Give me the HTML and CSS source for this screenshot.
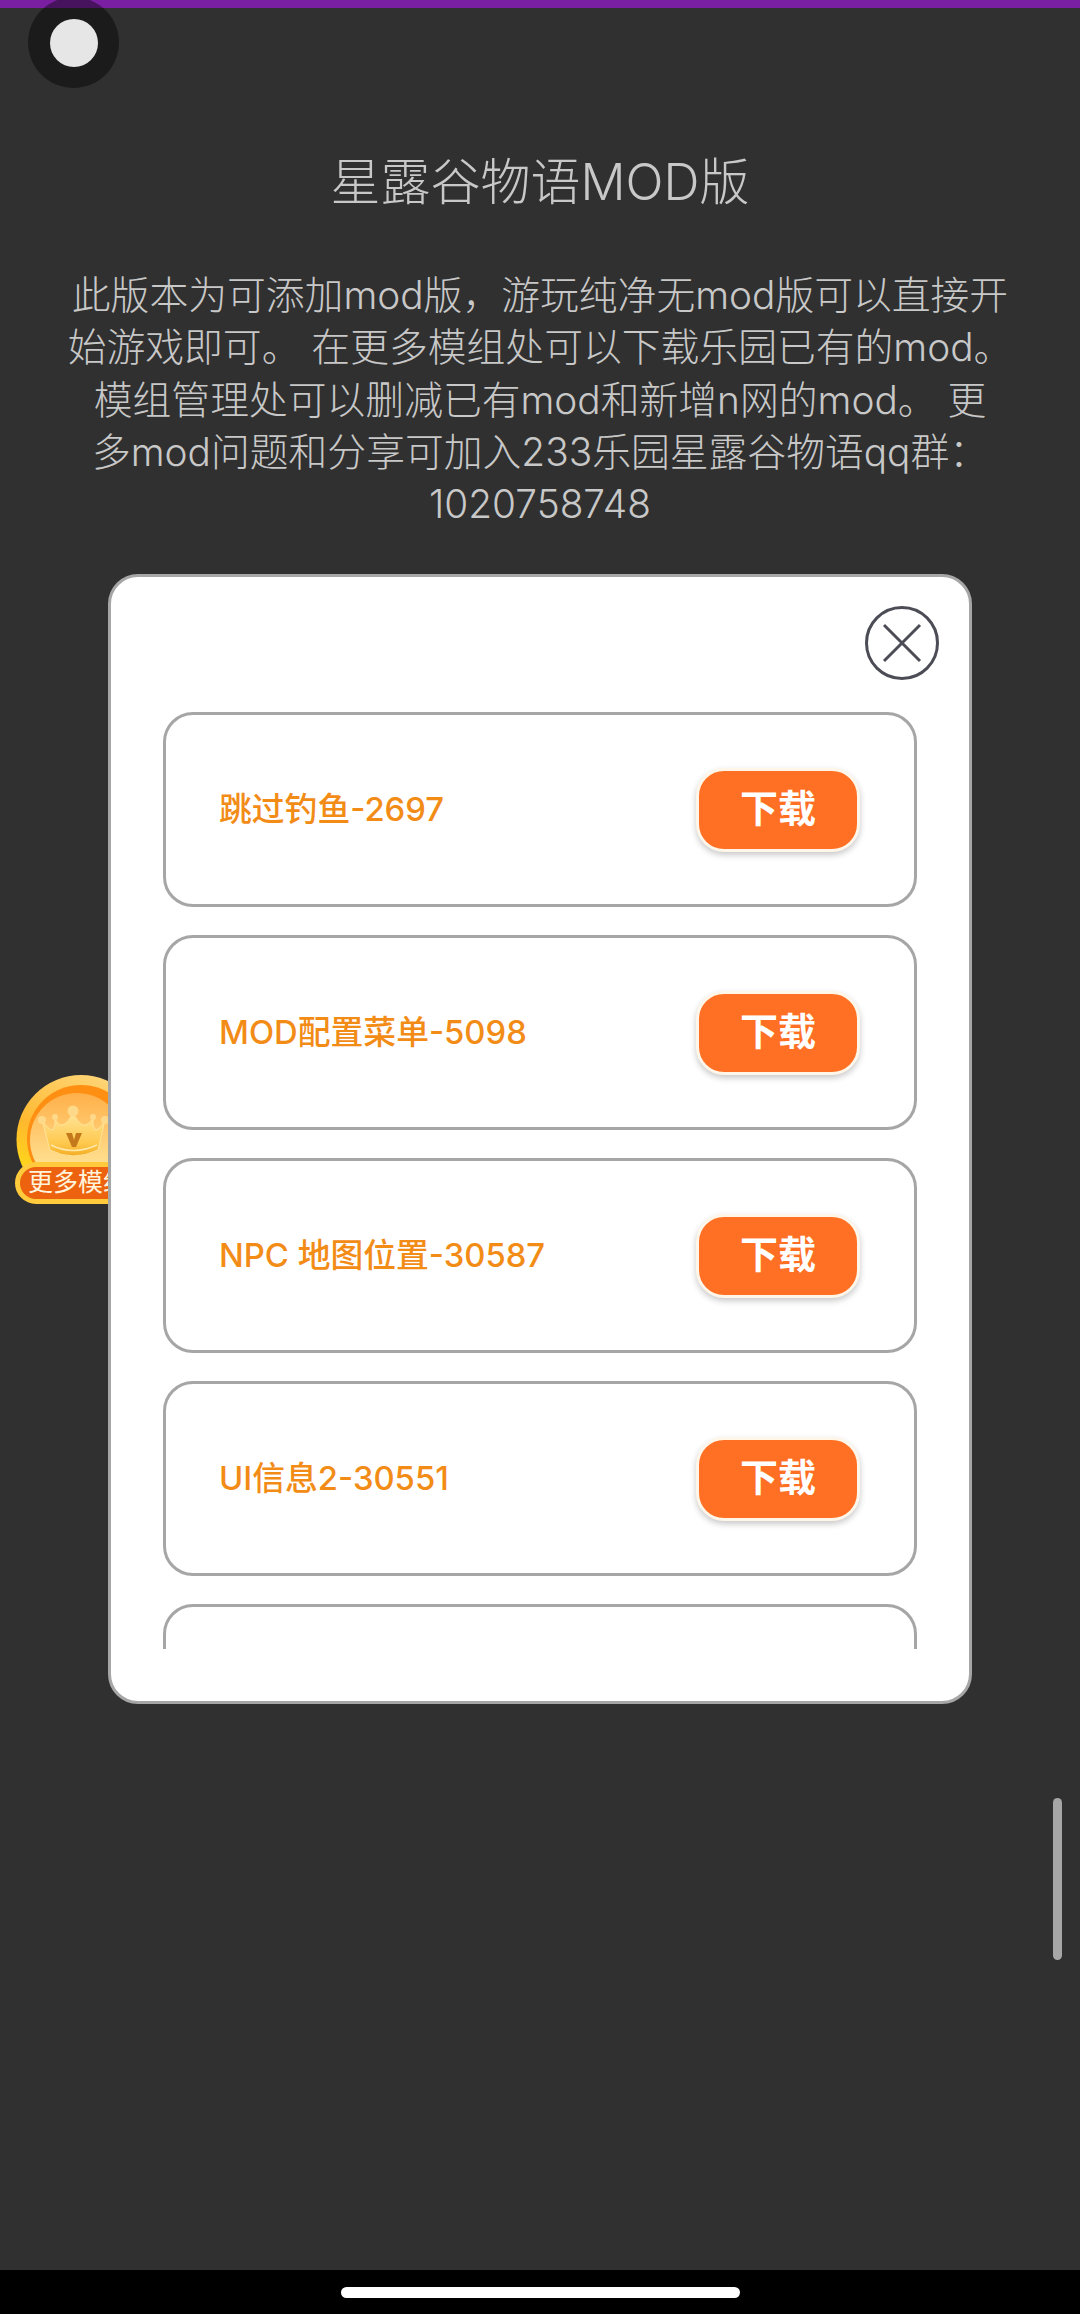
FILE: index.html
```html
<html>
  <head>
    <title>星露谷物语MOD版</title>
    <link rel="stylesheet" href="styles.css">
  </head>
  <body>
    <div class="top-bar"></div>
    <div class="page">
      <h1 class="title">星露谷物语MOD版</h1>
      <p class="intro">此版本为可添加mod版，游玩纯净无mod版可以直接开始游戏即可。 在更多模组处可以下载乐园已有的mod。 模组管理处可以删减已有mod和新增n网的mod。 更<br>多mod问题和分享可加入233乐园星露谷物语qq群：1020758748</p>
    </div>

    <!-- floating dot, top left -->
    <div class="float-dot"><div class="float-dot-inner"></div></div>

    <!-- more mods badge, sits under the dialog -->
    <div class="coin-badge">
      <svg class="coin" viewBox="0 0 130 130">
        <defs>
          <linearGradient id="rim" x1="0.7" y1="0" x2="0.2" y2="1">
            <stop offset="0" stop-color="#ffd67a" />
            <stop offset="0.55" stop-color="#ffb92e" />
            <stop offset="1" stop-color="#ffe80f" />
          </linearGradient>
          <linearGradient id="face" x1="0.5" y1="0" x2="0.5" y2="1">
            <stop offset="0" stop-color="#ffb04a" />
            <stop offset="0.7" stop-color="#ffdc8a" />
            <stop offset="1" stop-color="#ffeeb0" />
          </linearGradient>
          <linearGradient id="crown" x1="0" y1="0" x2="0" y2="1">
            <stop offset="0" stop-color="#ffe59c" />
            <stop offset="0.7" stop-color="#ffc94f" />
            <stop offset="1" stop-color="#f4ad25" />
          </linearGradient>
        </defs>
        <circle cx="66" cy="65.5" r="64.5" fill="url(#rim)" />
        <circle cx="66" cy="65" r="54" fill="#ff8f12" />
        <circle cx="62" cy="66" r="47" fill="url(#face)" />
        <path class="crown-body" d="M27 46 Q33 56 38 56 Q41 52 40 44 Q43 52 48 51 Q54 48 58 38 Q62 48 68 51 Q73 52 78 44 Q77 52 80 56 Q85 56 90 46 L83 76 Q58 88 35 76 Z" />
        <path class="crown-band" d="M36 71 Q58 82 82 71" />
        <circle class="crown-ball" cx="27" cy="46" r="4" />
        <circle class="crown-ball" cx="40" cy="43" r="3" />
        <circle class="crown-ball" cx="58" cy="37" r="5.5" />
        <circle class="crown-ball" cx="78" cy="43" r="3" />
        <circle class="crown-ball" cx="90" cy="46" r="4" />
        <path d="M51 59 L57 59 L59 66 L61 59 L67 59 L61 73 L57 73 Z" fill="#c47a1c" />
      </svg>
      <div class="coin-label">更多模组</div>
    </div>

    <div class="dialog">
      <div class="dialog-head">
        <svg class="close-icon" viewBox="0 0 76 76">
          <circle cx="38" cy="38" r="35.5" />
          <path d="M20 20 L56 56 M56 20 L20 56" />
        </svg>
      </div>
      <div class="mod-list">
        <div class="mod-row">
          <span class="mod-name">跳过钓鱼-2697</span>
          <span class="mod-btn">下载</span>
        </div>
        <div class="mod-row">
          <span class="mod-name">MOD配置菜单-5098</span>
          <span class="mod-btn">下载</span>
        </div>
        <div class="mod-row">
          <span class="mod-name">NPC 地图位置-30587</span>
          <span class="mod-btn">下载</span>
        </div>
        <div class="mod-row">
          <span class="mod-name">UI信息2-30551</span>
          <span class="mod-btn">下载</span>
        </div>
        <div class="mod-row"></div>
      </div>
    </div>

    <div class="scroll-thumb"></div>

    <div class="nav-bar"><div class="nav-pill"></div></div>
  </body>
</html>
```

FILE: styles.css
```css
html,
body {
  margin: 0;
  height: 100%;
}

body {
  position: relative;
  width: 1080px;
  height: 2314px;
  overflow: hidden;
  background-color: #303030;
  display: flex;
  flex-direction: column;
  font-family: Inter, "Noto Sans CJK SC", sans-serif;
}

.top-bar {
  height: 8px;
  background-color: #7b1fa2;
}

/* Title and intro text */
.page {
  flex: 1;
  padding: 0 60px;
  color: #c8c8c8;
  text-align: center;
}

.title {
  margin: 140px 0 0;
  font-size: 50px;
  line-height: 68px;
  font-weight: 300;
}

.intro {
  margin: 53px 0 0;
  font-size: 38.8px;
  line-height: 52.3px;
  font-weight: 300;
}

/* Floating dot */
.float-dot {
  position: absolute;
  left: 28px;
  top: -3px;
  width: 91px;
  height: 91px;
  border-radius: 50%;
  background-color: rgba(0, 0, 0, 0.42);
  display: flex;
  align-items: center;
  justify-content: center;
}

.float-dot-inner {
  width: 48px;
  height: 48px;
  border-radius: 50%;
  background-color: #e6e6e6;
}

/* Coin badge */
.coin-badge {
  position: absolute;
  left: 15px;
  top: 1074px;
  width: 130px;
}

.coin {
  display: block;
  width: 130px;
  height: 130px;
}

.crown-body {
  fill: url(#crown);
  stroke: #ffe49a;
  stroke-width: 1;
}

.crown-band {
  fill: none;
  stroke: #ffe9a8;
  stroke-width: 1.5;
}

.crown-ball {
  fill: #ffd98a;
}

.coin-label {
  position: absolute;
  left: 0;
  top: 88px;
  width: 130px;
  height: 42px;
  box-sizing: border-box;
  padding-left: 8px;
  border: 5px solid #ffca3c;
  border-radius: 21px;
  background-color: #ec620e;
  color: #fff4dc;
  font-size: 25px;
  line-height: 31px;
  white-space: nowrap;
  overflow: hidden;
}

/* Dialog */
.dialog {
  position: absolute;
  left: 108px;
  top: 574px;
  width: 864px;
  height: 1130px;
  box-sizing: border-box;
  padding: 0 52px;
  background-color: #fff;
  border: 3px solid #a6a6a6;
  border-radius: 30px;
  display: flex;
  flex-direction: column;
}

.dialog-head {
  height: 135px;
  flex: none;
  position: relative;
}

.close-icon {
  position: absolute;
  right: -23px;
  top: 28px;
  width: 76px;
  height: 76px;
  fill: none;
  stroke: #4c4c56;
  stroke-width: 3;
}

.mod-list {
  height: 937px;
  overflow: hidden;
  display: flex;
  flex-direction: column;
  gap: 28px;
}

.mod-row {
  height: 195px;
  flex: none;
  box-sizing: border-box;
  padding: 0 54px 0 53px;
  border: 3px solid #a6a6a6;
  border-radius: 30px;
  display: flex;
  align-items: center;
  justify-content: space-between;
}

.mod-name {
  margin-bottom: 6px;
  color: #f28c17;
  font-size: 32.8px;
  font-weight: 500;
}

.mod-btn {
  width: 164px;
  height: 84px;
  box-sizing: border-box;
  border: 3px solid #fff6ea;
  border-radius: 28px;
  background-color: #ff7024;
  box-shadow: 0 3px 6px rgba(0, 0, 0, 0.22);
  color: #fff;
  font-size: 38px;
  font-weight: 700;
  line-height: 74px;
  text-align: center;
}

.scroll-thumb {
  position: absolute;
  left: 1053px;
  top: 1798px;
  width: 9px;
  height: 162px;
  border-radius: 5px;
  background-color: #a6a6a6;
}

/* Bottom navigation */
.nav-bar {
  height: 44px;
  flex: none;
  background-color: #000;
  display: flex;
  justify-content: center;
  padding-top: 17px;
  box-sizing: border-box;
}

.nav-pill {
  width: 399px;
  height: 11px;
  border-radius: 6px;
  background-color: #fff;
}
```
